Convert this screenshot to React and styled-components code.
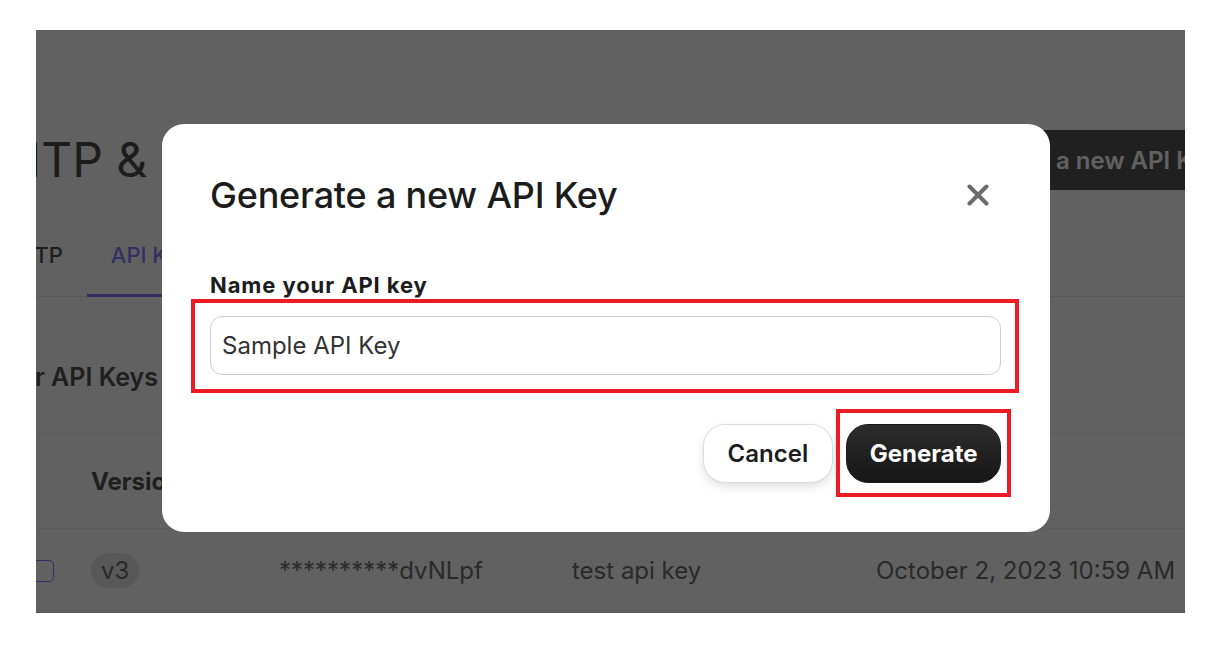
import React from 'react';
import styled, { createGlobalStyle } from 'styled-components';

const GlobalStyle = createGlobalStyle`
  html, body {
    margin: 0;
    padding: 0;
    background: #ffffff;
  }
  body {
    font-family: Inter, "Noto Sans", sans-serif;
  }
  * {
    box-sizing: border-box;
  }
`;

const Viewport = styled.div`
  position: relative;
  width: 1149px;
  height: 583px;
  margin: 30px 0 0 36px;
  overflow: hidden;
  background: #ffffff;
`;

const Page = styled.div`
  width: 1341px;
  margin-left: -101px;
  padding: 100px 32px 0;
`;

const Header = styled.div`
  display: flex;
  align-items: center;
  justify-content: space-between;
  height: 60px;
`;

const Heading = styled.h1`
  margin: 0;
  font-size: 48px;
  line-height: 58px;
  font-weight: 400;
  color: #4a4a4a;
`;

const PrimaryAction = styled.button`
  height: 60px;
  padding: 0 24px;
  border: none;
  border-radius: 8px;
  background: #555555;
  color: #ffffff;
  font-family: inherit;
  font-size: 24px;
  font-weight: 600;
`;

const TabList = styled.div`
  display: flex;
  margin-top: 27px;
  padding-left: 9px;
  border-bottom: 1px solid #e6e6e6;
`;

const Tab = styled.div`
  padding: 24px 24px 25px;
  margin-bottom: -1px;
  font-size: 22px;
  line-height: 28px;
  font-weight: 500;
  color: ${(p) => (p.$active ? '#8f7dff' : '#505050')};
  border-bottom: 3px solid ${(p) => (p.$active ? '#8f7dff' : 'transparent')};
`;

const SectionTitle = styled.h2`
  margin: 64px 0 40px 22px;
  font-size: 25px;
  line-height: 32px;
  font-weight: 600;
  color: #525252;
`;

const Row = styled.div`
  display: grid;
  grid-template-columns: 124px 188px 293px 304px 1fr;
  align-items: center;
  height: ${(p) => (p.$head ? '95px' : '85px')};
  border-top: 1px solid #ececec;
  border-bottom: ${(p) => (p.$head ? 'none' : '1px solid #e2e2e2')};
  font-size: 24px;
  font-weight: ${(p) => (p.$head ? 700 : 400)};
  color: ${(p) => (p.$head ? '#525252' : '#6e6e6e')};
  white-space: nowrap;
`;

const CheckCell = styled.div`
  padding-left: 65px;
`;

const Checkbox = styled.span`
  display: block;
  width: 22px;
  height: 22px;
  border: 1.5px solid #8f7dff;
  border-radius: 5px;
`;

const VersionPill = styled.span`
  display: inline-flex;
  align-items: center;
  height: 35px;
  padding: 0 10px;
  border-radius: 18px;
  background: #e6e6e6;
  justify-self: start;
`;

const Backdrop = styled.div`
  position: absolute;
  inset: 0;
  display: flex;
  align-items: center;
  justify-content: center;
  padding: 13px 9px 0 0;
  background: rgba(0, 0, 0, 0.62);
`;

const Modal = styled.div`
  width: 888px;
  display: flex;
  flex-direction: column;
  padding: 49px 49px 49px 48px;
  background: #ffffff;
  border-radius: 22px;
`;

const ModalHeader = styled.div`
  display: flex;
  align-items: center;
  justify-content: space-between;
  height: 44px;
`;

const ModalTitle = styled.h2`
  margin: 0;
  font-size: 36px;
  line-height: 44px;
  font-weight: 500;
  color: #1c1c1c;
  letter-spacing: -0.2px;
`;

const CloseButton = styled.button`
  display: flex;
  align-items: center;
  justify-content: center;
  width: 46px;
  height: 44px;
  padding: 0;
  border: none;
  background: transparent;
  color: #6b6b6b;
`;

const Label = styled.label`
  margin-top: 54px;
  font-size: 22px;
  line-height: 28px;
  font-weight: 700;
  letter-spacing: 0.9px;
  color: #1c1c1c;
`;

const Highlight = styled.div`
  position: relative;

  &::after {
    content: "";
    position: absolute;
    inset: ${(p) => p.$inset};
    border: 4px solid #ed1c24;
    pointer-events: none;
  }
`;

const FieldWrap = styled(Highlight)`
  margin-top: 17px;
`;

const TextInput = styled.input`
  display: block;
  width: 100%;
  height: 59px;
  padding: 0 11px;
  border: 1px solid #cfcfcf;
  border-radius: 12px;
  outline: none;
  font-family: inherit;
  font-size: 24px;
  color: #333333;
  background: #ffffff;
`;

const Footer = styled.div`
  display: flex;
  justify-content: flex-end;
  align-items: center;
  gap: 13px;
  margin-top: 49px;
`;

const Button = styled.button`
  height: 59px;
  padding: 0 ${(p) => (p.$primary ? '22.5px' : '24px')};
  border-radius: 22px;
  font-family: inherit;
  font-size: 24px;
  font-weight: ${(p) => (p.$primary ? 700 : 600)};
  border: 1px solid ${(p) => (p.$primary ? '#1b1b1b' : '#dadada')};
  color: ${(p) => (p.$primary ? '#ffffff' : '#1c1c1c')};
  background: ${(p) =>
    p.$primary ? 'linear-gradient(180deg, #2c2c2c 0%, #161616 100%)' : '#ffffff'};
  box-shadow: ${(p) =>
    p.$primary ? 'none' : '0 4px 10px rgba(0, 0, 0, 0.12)'};
`;

const CloseIcon = () => (
  <svg width="22" height="22" viewBox="0 0 22 22" fill="none">
    <path d="M2.5 2.5 L19.5 19.5 M19.5 2.5 L2.5 19.5" stroke="currentColor" strokeWidth="4" strokeLinecap="round" />
  </svg>
);

export default function App() {
  return (
    <>
      <GlobalStyle />
      <Viewport>
        <Page>
          <Header>
            <Heading>SMTP &amp; API</Heading>
            <PrimaryAction>Generate a new API Key</PrimaryAction>
          </Header>
          <TabList>
            <Tab>SMTP</Tab>
            <Tab $active>API Keys</Tab>
          </TabList>
          <SectionTitle>Your API Keys</SectionTitle>
          <Row $head>
            <div />
            <div>Version</div>
            <div>API Key</div>
            <div>Name</div>
            <div>Created</div>
          </Row>
          <Row>
            <CheckCell>
              <Checkbox />
            </CheckCell>
            <VersionPill>v3</VersionPill>
            <div>**********dvNLpf</div>
            <div>test api key</div>
            <div>October 2, 2023 10:59 AM</div>
          </Row>
        </Page>

        <Backdrop>
          <Modal>
            <ModalHeader>
              <ModalTitle>Generate a new API Key</ModalTitle>
              <CloseButton aria-label="Close">
                <CloseIcon />
              </CloseButton>
            </ModalHeader>
            <Label htmlFor="key-name">Name your API key</Label>
            <FieldWrap $inset="-17px -18px -18px -19px">
              <TextInput id="key-name" value="Sample API Key" readOnly />
            </FieldWrap>
            <Footer>
              <Button>Cancel</Button>
              <Highlight $inset="-15px -10px -14px -10px">
                <Button $primary>Generate</Button>
              </Highlight>
            </Footer>
          </Modal>
        </Backdrop>
      </Viewport>
    </>
  );
}
